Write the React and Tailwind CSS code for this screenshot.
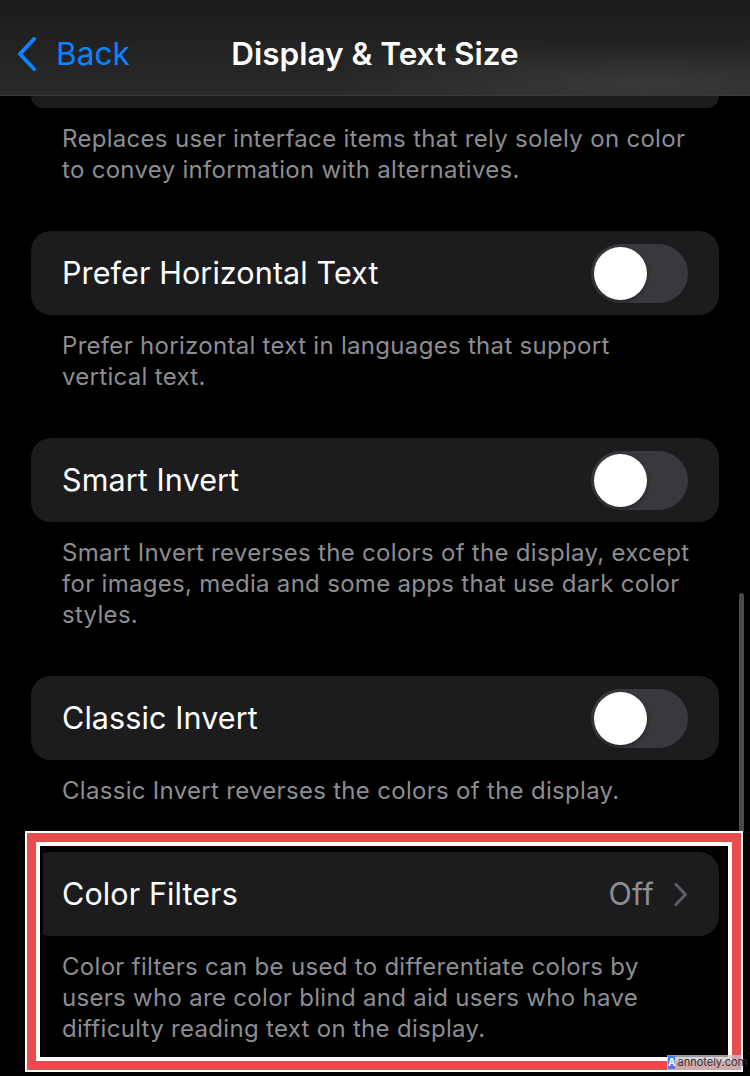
const sections = [
  {
    title: 'Prefer Horizontal Text',
    lines: ['Prefer horizontal text in languages that support', 'vertical text.'],
  },
  {
    title: 'Smart Invert',
    lines: [
      'Smart Invert reverses the colors of the display, except',
      'for images, media and some apps that use dark color',
      'styles.',
    ],
  },
  {
    title: 'Classic Invert',
    lines: ['Classic Invert reverses the colors of the display.'],
  },
];

function Toggle() {
  return (
    <div className="w-[97px] h-[59px] rounded-full bg-[#39393d] p-[3px] flex items-center">
      <div className="w-[53px] h-[53px] rounded-full bg-white shadow-[0_2px_4px_rgba(0,0,0,0.35)]" />
    </div>
  );
}

function Footnote({ lines }) {
  return (
    <div className="px-[62px] pt-[14.5px] pb-[46.5px] text-[24px] leading-[31px] tracking-[0.3px] text-[#8d8d93]">
      {lines.map((line) => (
        <div key={line} className="whitespace-nowrap">
          {line}
        </div>
      ))}
    </div>
  );
}

export default function App() {
  return (
    <div
      className="relative w-[750px] h-[1076px] overflow-hidden bg-black"
      style={{ fontFamily: 'Inter, "Noto Sans", sans-serif' }}
    >
      {/* Nav bar */}
      <header className="h-[96px] border-b border-[#3a3a3c] bg-[radial-gradient(ellipse_at_86%_88%,rgba(70,70,70,0.55),transparent_35%),linear-gradient(to_bottom,#1b1b1b,#2a2a2a)] grid grid-cols-[1fr_auto_1fr] items-center pt-[12px]">
        <div className="flex items-center text-[#0a84ff]">
          <svg width="24" height="36" viewBox="0 0 24 36" className="ml-[15px]" fill="none">
            <path d="M19 3 L5 18 L19 33" stroke="currentColor" strokeWidth="4" strokeLinecap="round" strokeLinejoin="round" />
          </svg>
          <span className="text-[31.5px] ml-[17px] tracking-[0.1px]">Back</span>
        </div>
        <h1 className="text-[31.5px] font-semibold text-white tracking-[0px]">Display &amp; Text Size</h1>
        <div />
      </header>

      {/* tail of the card scrolled under the bar */}
      <div className="mx-[31px] h-[12px] rounded-b-[20px] bg-[#1c1c1e]" />
      <Footnote
        lines={[
          'Replaces user interface items that rely solely on color',
          'to convey information with alternatives.',
        ]}
      />

      {sections.map((s) => (
        <div key={s.title}>
          <div className="mx-[31px] h-[84px] rounded-[20px] bg-[#1c1c1e] flex items-center justify-between px-[31px]">
            <span className="text-[30.5px] text-white tracking-[0.1px]">{s.title}</span>
            <Toggle />
          </div>
          <Footnote lines={s.lines} />
        </div>
      ))}

      <div className="mx-[31px] h-[84px] rounded-[20px] bg-[#1c1c1e] flex items-center justify-between pl-[31px] pr-[31px]">
        <span className="text-[30.5px] text-white tracking-[0.1px]">Color Filters</span>
        <div className="flex items-center gap-[19px]">
          <span className="text-[30.5px] text-[#8d8d93] tracking-[0.3px]">Off</span>
          <svg width="15" height="25" viewBox="0 0 15 25" fill="none" className="text-[#5c5c61]">
            <path d="M3 2.5 L12.5 12.5 L3 22.5" stroke="currentColor" strokeWidth="3.2" strokeLinecap="round" strokeLinejoin="round" />
          </svg>
        </div>
      </div>
      <Footnote
        lines={[
          'Color filters can be used to differentiate colors by',
          'users who are color blind and aid users who have',
          'difficulty reading text on the display.',
        ]}
      />

      {/* scroll indicator */}
      <div className="absolute right-[6px] top-[593px] w-[5px] h-[240px] rounded-full bg-[#4a4a4c]" />

      {/* highlight frame */}
      <div className="absolute left-[25px] top-[831px] w-[718px] h-[241px] border-2 border-white">
        <div className="h-full border-[9px] border-[#e94c4c]">
          <div className="h-full border-[4px] border-white">
            <div className="h-full border-[3px] border-black" />
          </div>
        </div>
      </div>

      {/* watermark */}
      <div className="absolute left-[667px] top-[1055px] h-[15px] w-[75px] flex items-center gap-[2px] bg-[rgba(200,200,205,0.75)] px-[1px]">
        <span className="w-[12px] h-[13px] bg-[#4a7cf0] text-white text-[10px] font-bold leading-[13px] text-center">A</span>
        <span className="text-[11px] leading-[13px] text-[#333]">annotely.com</span>
      </div>
    </div>
  );
}
